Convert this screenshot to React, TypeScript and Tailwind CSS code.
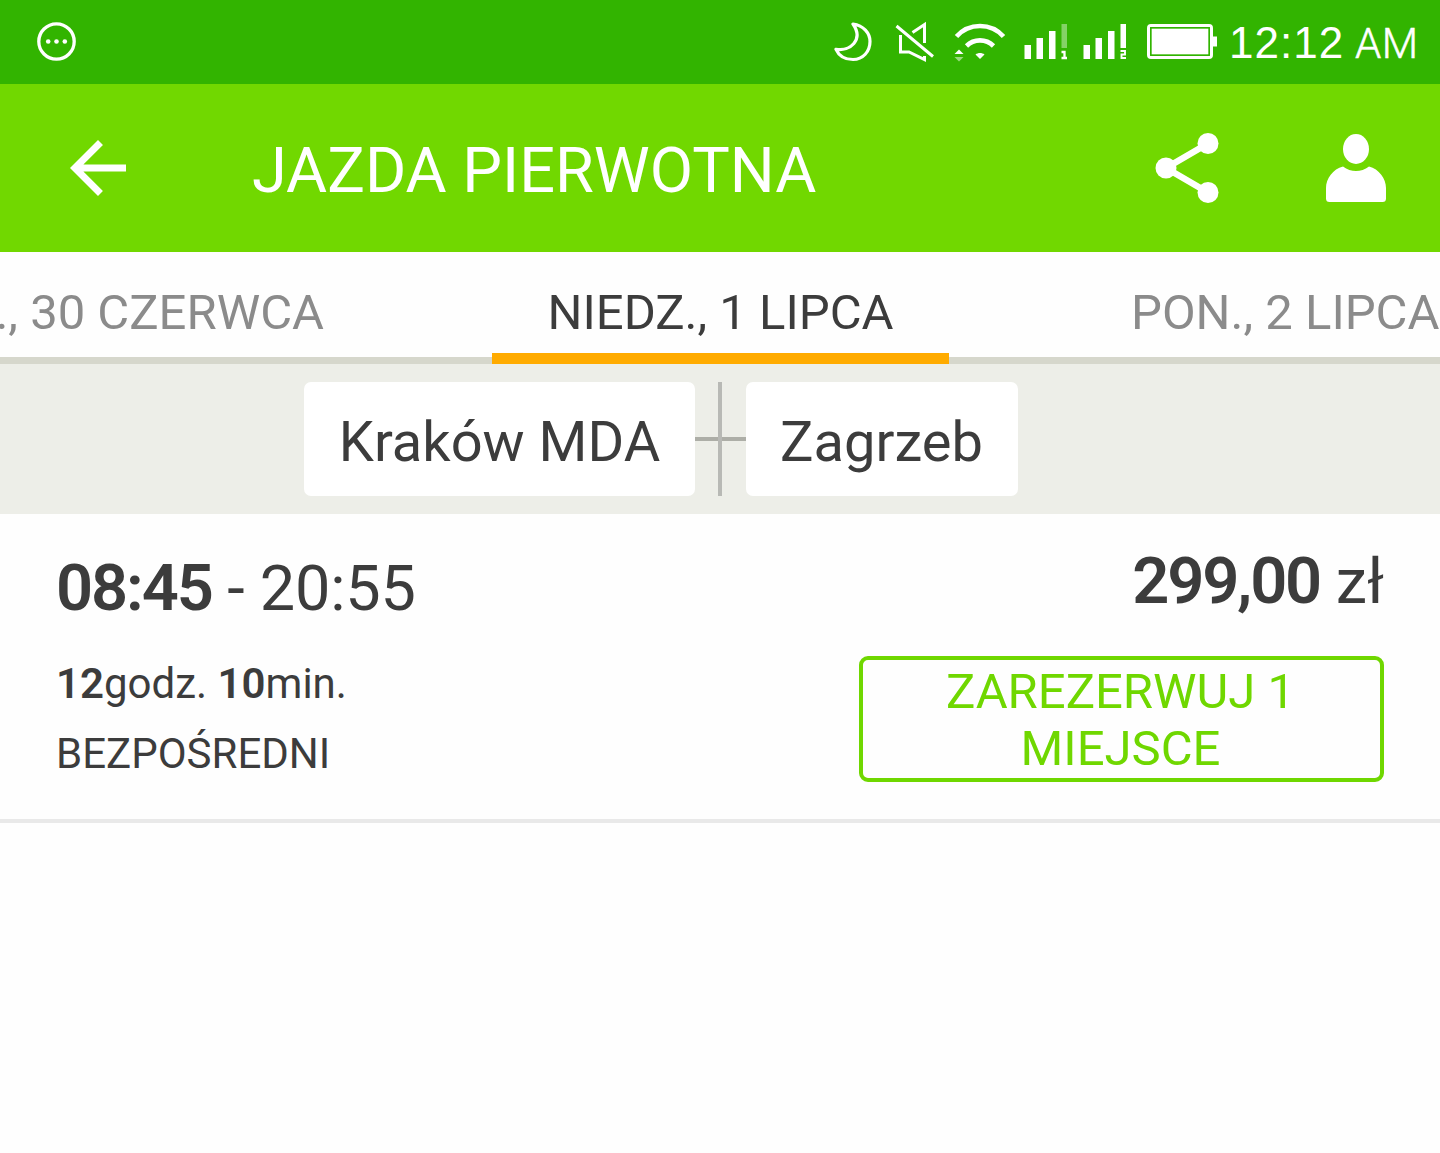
import React from "react";

const MoonIcon = () => (
  <svg width="40" height="42" viewBox="0 0 40 42" fill="none">
    <path
      d="M19 3C29.500 4.500 36 12 36 20.500C36 30.500 29 38.500 19 38.500C11.500 38.500 5 35 2 28.300C16 30.500 30 19 19 3Z"
      stroke="white"
      strokeWidth="3.200"
      strokeLinejoin="round"
    />
  </svg>
);

const MuteIcon = () => (
  <svg width="40" height="42" viewBox="0 0 40 42" fill="none">
    <path
      d="M1.500 5L38 35.500M5.500 14V31H14L29.500 38.500V35M17.500 11.500L29.500 3.500V22"
      stroke="white"
      strokeWidth="3"
    />
  </svg>
);

const WifiIcon = () => (
  <svg width="52" height="42" viewBox="0 0 52 42" fill="none">
    <path d="M2.500 15.500C15 1.500 37 1.500 49.500 15.500" stroke="white" strokeWidth="4.600" />
    <path d="M12.500 25C20 17.500 32 17.500 39.500 25" stroke="white" strokeWidth="4.600" />
    <path d="M21.500 33.500C24 31.500 28 31.500 30.500 33.500L26 38Z" fill="white" />
    <path d="M0.500 33L5 28.500L9.500 33Z" fill="white" />
    <path d="M0.500 36L5 40.500L9.500 36Z" fill="white" opacity="0.5" />
  </svg>
);

// the last bar is dimmed when the sim has no full signal
const SignalIcon = ({ sim, full }: { sim: number; full?: boolean }) => (
  <svg width="44" height="36" viewBox="0 0 44 36" fill="none">
    <path d="M0.500 21h6.500v14H0.500zM12.500 14h6.500v21h-6.500zM25 7h6.500v28H25z" fill="white" />
    <path d="M37.500 0h5.500v24h-5.500z" fill="white" opacity={full ? 1 : 0.4} />
    {sim === 1 ? (
      <path d="M37.500 28H40.500V34M37.500 34H43" stroke="white" strokeWidth="2.300" />
    ) : (
      <path d="M37.500 27H42V30.500H38.500V34H43" stroke="white" strokeWidth="1.900" />
    )}
  </svg>
);

const BatteryIcon = () => (
  <svg width="70" height="36" viewBox="0 0 70 36" fill="none">
    <rect x="1.500" y="1.500" width="63" height="32" rx="2.500" stroke="white" strokeWidth="3" />
    <rect x="4.500" y="4.500" width="57" height="26" fill="white" />
    <path d="M66 12.500h4v10h-4z" fill="white" />
    <rect x="3.700" y="3.700" width="58.600" height="27.600" stroke="#32b400" strokeWidth="1.300" />
  </svg>
);

const StatusBar = () => (
  <div className="flex h-[84px] items-center bg-[#32b400] pl-[37px] text-white">
    <svg width="39" height="40" viewBox="0 0 39 40" fill="none">
      <circle cx="19.500" cy="19.500" r="17.700" stroke="white" strokeWidth="3.300" />
      <circle cx="11.200" cy="19.500" r="2.300" fill="white" />
      <circle cx="19.500" cy="19.500" r="2.300" fill="white" />
      <circle cx="27.800" cy="19.500" r="2.300" fill="white" />
    </svg>
    <div className="ml-[758px] flex items-center">
      <MoonIcon />
      <div className="ml-[21px]">
        <MuteIcon />
      </div>
      <div className="ml-[19px]">
        <WifiIcon />
      </div>
      <div className="ml-[18px]">
        <SignalIcon sim={1} />
      </div>
      <div className="ml-[15px]">
        <SignalIcon sim={2} full />
      </div>
      <div className="ml-[20px]">
        <BatteryIcon />
      </div>
    </div>
    <div className="ml-[12px] flex items-baseline whitespace-nowrap pt-[2px] leading-none">
      <span className="font-['Liberation_Sans',Arial,sans-serif] text-[44px] tracking-[1px]">12:12</span>
      <span className="ml-[11px] text-[42px] font-light tracking-[0.3px] [-webkit-text-stroke:0.5px_white]">
        AM
      </span>
    </div>
  </div>
);

const AppBar = () => (
  <div className="flex h-[168px] items-center bg-[#71d800] pl-[56px] text-white">
    <button>
      <svg width="84" height="84" viewBox="0 0 24 24" fill="white">
        <path d="M20 11H7.830l5.590-5.590L12 4l-8 8 8 8 1.410-1.410L7.830 13H20v-2z" />
      </svg>
    </button>
    <h1 className="ml-[112px] w-[902px] whitespace-nowrap pt-[4px] text-[63px] leading-none">
      JAZDA PIERWOTNA
    </h1>
    <button>
      <svg width="66" height="72" viewBox="0 0 66 72" fill="white">
        <path d="M54 11.500L12 36L54 60.500" fill="none" stroke="white" strokeWidth="6.500" />
        <circle cx="12" cy="36" r="10.500" />
        <circle cx="54" cy="11.500" r="10.500" />
        <circle cx="54" cy="60.500" r="10.500" />
      </svg>
    </button>
    <button className="ml-[106px]">
      <svg width="60" height="68" viewBox="0 0 60 68" fill="white">
        <ellipse cx="30" cy="15" rx="13" ry="15" />
        <path d="M17 32.500C25 38.500 35 38.500 43 32.500C53 35 60 44.500 60 54V64.500Q60 68 56.500 68H3.500Q0 68 0 64.500V54C0 44.500 7 35 17 32.500Z" />
      </svg>
    </button>
  </div>
);

const DateTabs = () => (
  <div className="flex h-[112px] border-b-[7px] border-[#d6d7cc] bg-[#fefefe] pt-[32px] text-[49px] leading-[58px] whitespace-nowrap text-[#8b8b8b]">
    <div className="flex w-[324px] justify-end">., 30 CZERWCA</div>
    <div className="w-[807px] pr-[14px] text-center text-[#3c3c3c]">NIEDZ., 1 LIPCA</div>
    <div className="w-[309px]">PON., 2 LIPCA</div>
  </div>
);

const RouteBar = () => (
  <div className="relative flex h-[150px] items-center bg-[#edeee8] pl-[304px] text-[56px] text-[#3c3c3c]">
    {/* active tab marker */}
    <div className="absolute left-[492px] -top-[11px] h-[11px] w-[457px] bg-[#ffab00]" />
    <div className="flex h-[114px] w-[391px] items-center justify-center rounded-[7px] bg-white pt-[5px] whitespace-nowrap">
      Kraków MDA
    </div>
    <div className="flex h-[114px] w-[51px] items-center">
      <div className="h-[4px] w-[23px] bg-[#adaea7]" />
      <div className="h-[114px] w-[4px] bg-[#b8b9b5]" />
      <div className="h-[4px] w-[24px] bg-[#adaea7]" />
    </div>
    <div className="flex h-[114px] w-[272px] items-center justify-center rounded-[7px] bg-white pt-[5px] pr-[1px]">
      Zagrzeb
    </div>
  </div>
);

const TripCard = () => (
  <div className="flex h-[309px] justify-between border-b-4 border-[#e9e9e9] px-14 text-[#3c3c3c]">
    <div className="whitespace-nowrap">
      <p className="mt-[37px] text-[63px] leading-[74px] tracking-[-0.2px]">
        <span className="text-[65px] font-semibold tracking-[-2.100px]">08:45</span> - 20:55
      </p>
      <p className="mt-[33px] text-[42px] leading-[50px]">
        <span className="font-semibold">12</span>godz. <span className="font-semibold">10</span>min.
      </p>
      <p className="mt-[20px] text-[42px] leading-[50px]">BEZPOŚREDNI</p>
    </div>
    <div className="flex flex-col items-end">
      <p className="mt-[30px] text-[63px] leading-[74px]">
        <span className="text-[65px] font-semibold tracking-[-2.200px]">299,00</span> zł
      </p>
      <button className="mt-[37px] h-[126px] w-[525px] rounded-[9px] border-4 border-[#6fd700] pt-[1px] pr-[41px] pl-[39px] text-[49px] leading-[57px] text-[#6fd700]">
        ZAREZERWUJ 1 MIEJSCE
      </button>
    </div>
  </div>
);

const App = () => {
  return (
    <div className="h-[1153px] w-[1440px] overflow-hidden bg-[#fefefe] font-['Roboto',sans-serif]">
      <StatusBar />
      <AppBar />
      <DateTabs />
      <RouteBar />
      <TripCard />
    </div>
  );
};

export default App;
